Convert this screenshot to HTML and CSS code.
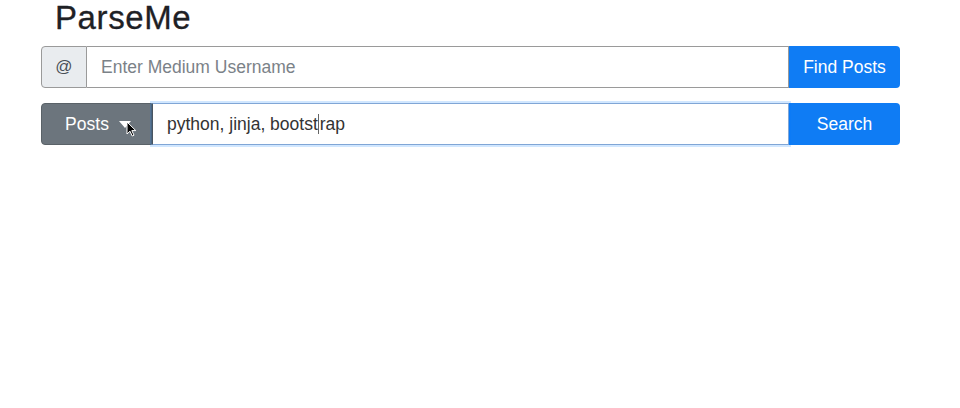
FILE: index.html
```html
<!DOCTYPE html>
<html lang="en">
<head>
<meta charset="utf-8">
<title>ParseMe</title>
<link rel="stylesheet" href="styles.css">
</head>
<body>
<main class="page">
  <h1 class="title">ParseMe</h1>
  <form class="row">
    <span class="addon">@</span>
    <input class="field" type="text" placeholder="Enter Medium Username">
    <button class="btn btn-primary" type="button">Find Posts</button>
  </form>
  <form class="row">
    <button class="btn btn-secondary dropdown" type="button">Posts <span class="caret"></span>
      <svg class="pointer" width="11" height="16" viewBox="0 0 11 16"><path d="M1 1 L1 13 L4 10.2 L6.2 15 L8 14.2 L5.8 9.6 L9.8 9.6 Z" fill="#000" stroke="#fff" stroke-width="1"/></svg>
    </button>
    <div class="field focused">python, jinja, bootst<span class="text-caret"></span>rap</div>
    <button class="btn btn-primary" type="button">Search</button>
  </form>
</main>
</body>
</html>
```
FILE: styles.css
```css
* { box-sizing: border-box; }
html, body { margin: 0; background: #fff; }
body {
  font-family: "Liberation Sans", Arial, sans-serif;
  color: #212529;
}
.page {
  width: 960px;
  padding: 0 60px 0 41px;
}
.title {
  margin: 0 0 10px 14px;
  font-size: 33px;
  font-weight: 400;
  line-height: 36px;
  color: #1e2125;
  letter-spacing: 0.6px;
  -webkit-text-stroke: 0.3px #1e2125;
}
.row {
  display: flex;
  height: 42px;
  margin: 0 0 15px 0;
}
.addon {
  width: 46px;
  display: flex;
  align-items: center;
  justify-content: center;
  background: #e9ecef;
  border: 1px solid #9a9a9a;
  border-radius: 4px 0 0 4px;
  font-size: 17px;
  color: #495057;
}
.field {
  flex: 1;
  min-width: 0;
  height: 42px;
  border: 1px solid #9a9a9a;
  border-left: none;
  padding: 0 14px;
  font-family: inherit;
  font-size: 17.5px;
  color: #333;
  background: #fff;
  outline: none;
  display: flex;
  align-items: center;
}
.field::placeholder { color: #7b8288; }
.field.focused {
  border: 1px solid #80a6d6;
  border-left: 1px solid #4a5560;
  box-shadow: 0 0 0 2px rgba(0, 123, 255, 0.18);
  position: relative;
  z-index: 1;
}
.text-caret {
  display: inline-block;
  width: 1px;
  height: 20px;
  background: #666;
  margin: 0 0.5px;
}
.btn {
  border: 0;
  font-family: inherit;
  font-size: 17.5px;
  color: #fff;
  cursor: pointer;
  padding: 0;
}
.btn-primary {
  width: 110px;
  background: #0f7cf4;
  border-radius: 0 4px 4px 0;
}
.row .btn-primary:last-child { width: 111px; }
.btn-secondary {
  width: 111px;
  background: #6c757d;
  border: 1px solid #5a6268;
  border-radius: 4px 0 0 4px;
  position: relative;
  display: flex;
  align-items: center;
  justify-content: center;
  gap: 10px;
  padding-left: 3px;
}
.caret {
  width: 0;
  height: 0;
  border-left: 6px solid transparent;
  border-right: 6px solid transparent;
  border-top: 7px solid #fff;
  margin-top: 1px;
}
.pointer {
  position: absolute;
  left: 84px;
  top: 17px;
}
```
